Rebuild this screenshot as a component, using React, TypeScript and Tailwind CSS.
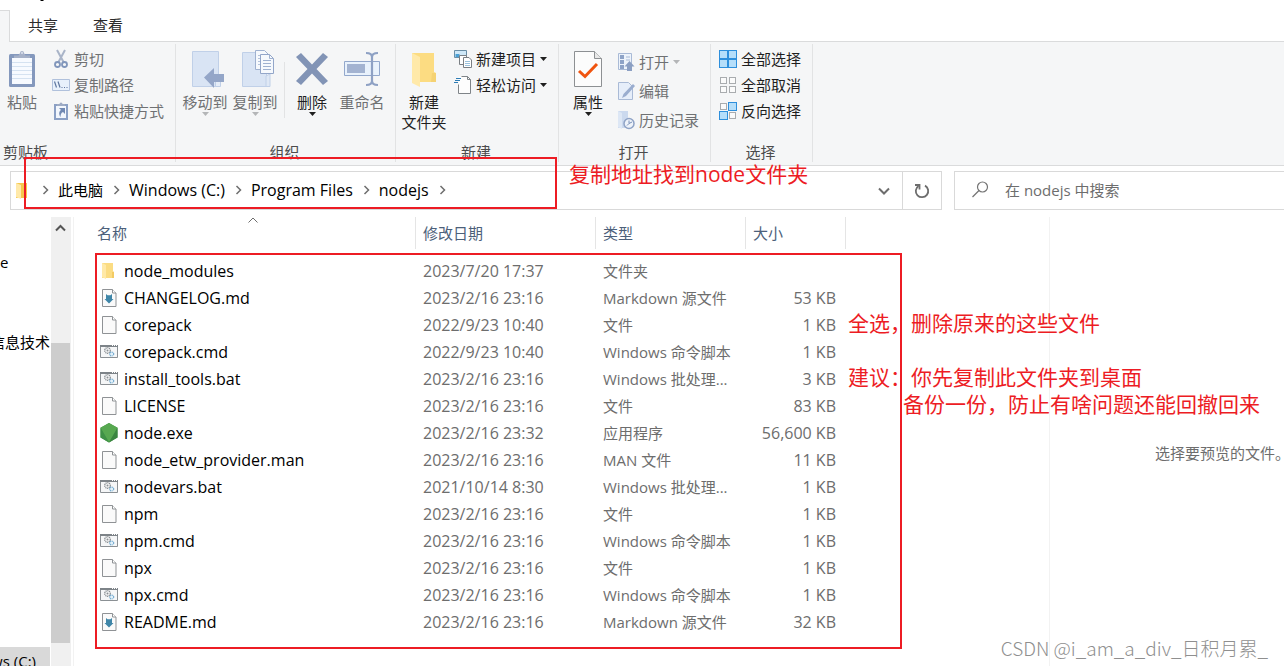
import type { ReactNode } from 'react'
import clsx from 'clsx'

type FileKind = 'folder' | 'md' | 'file' | 'script' | 'node'

interface FileRow {
  name: string
  date: string
  type: string
  size?: string
  kind: FileKind
}

const files: FileRow[] = [
  { name: 'node_modules', date: '2023/7/20 17:37', type: '文件夹', kind: 'folder' },
  { name: 'CHANGELOG.md', date: '2023/2/16 23:16', type: 'Markdown 源文件', size: '53 KB', kind: 'md' },
  { name: 'corepack', date: '2022/9/23 10:40', type: '文件', size: '1 KB', kind: 'file' },
  { name: 'corepack.cmd', date: '2022/9/23 10:40', type: 'Windows 命令脚本', size: '1 KB', kind: 'script' },
  { name: 'install_tools.bat', date: '2023/2/16 23:16', type: 'Windows 批处理...', size: '3 KB', kind: 'script' },
  { name: 'LICENSE', date: '2023/2/16 23:16', type: '文件', size: '83 KB', kind: 'file' },
  { name: 'node.exe', date: '2023/2/16 23:32', type: '应用程序', size: '56,600 KB', kind: 'node' },
  { name: 'node_etw_provider.man', date: '2023/2/16 23:16', type: 'MAN 文件', size: '11 KB', kind: 'file' },
  { name: 'nodevars.bat', date: '2021/10/14 8:30', type: 'Windows 批处理...', size: '1 KB', kind: 'script' },
  { name: 'npm', date: '2023/2/16 23:16', type: '文件', size: '1 KB', kind: 'file' },
  { name: 'npm.cmd', date: '2023/2/16 23:16', type: 'Windows 命令脚本', size: '1 KB', kind: 'script' },
  { name: 'npx', date: '2023/2/16 23:16', type: '文件', size: '1 KB', kind: 'file' },
  { name: 'npx.cmd', date: '2023/2/16 23:16', type: 'Windows 命令脚本', size: '1 KB', kind: 'script' },
  { name: 'README.md', date: '2023/2/16 23:16', type: 'Markdown 源文件', size: '32 KB', kind: 'md' },
]

const folders = ['Windows (C:)', 'Program Files', 'nodejs']

/* ---------- file icons ---------- */

function FileIcon({ kind }: { kind: FileKind }) {
  if (kind === 'folder') {
    return (
      <svg width="18" height="18" viewBox="0 0 18 18">
        <path d="M2 1h11v8l1 1v6H2z" fill="#fbdc83" />
        <path d="M2 1l4 2v14l-4-2z" fill="#ffe9a8" />
        <path d="M12 10h2v6h-2z" fill="#f3cb63" />
      </svg>
    )
  }
  if (kind === 'script') {
    return (
      <svg width="18" height="18" viewBox="0 0 18 18">
        <path d="M.5 2.5h17v12H.5z" fill="#f5f6f7" stroke="#8b9094" />
        <path d="M0 2h18v2H0z" fill="#7d8388" />
        <path d="M12 2.500h1M14 2.500h1M16 2.500h1" stroke="#fff" />
        <circle cx="7.500" cy="7.500" r="2.800" fill="none" stroke="#8b9094" strokeDasharray="1.200 .6" strokeWidth="1.300" />
        <circle cx="7.500" cy="7.500" r="1" fill="#8b9094" />
        <circle cx="11.700" cy="11" r="2" fill="#e3f1fa" stroke="#77add0" strokeDasharray="1.200 .5" strokeWidth="1.200" />
      </svg>
    )
  }
  if (kind === 'node') {
    return (
      <svg width="18" height="20" viewBox="0 0 18 20">
        <path d="M9 0l8.500 4.800v9.800L9 19.500.5 14.600V4.800z" fill="#46984a" />
        <path d="M9 0l8.500 4.800L9 19.500.5 4.800z" fill="#57a850" />
        <path d="M.5 4.800L9 19.500.5 14.600z" fill="#3f9146" />
        <path d="M17.500 4.800v9.800L9 19.500z" fill="#3a8540" />
      </svg>
    )
  }
  return (
    <svg width="18" height="20" viewBox="0 0 18 20">
      <path d="M2.500 1.500h10l3.500 3.500v13.500H2.500z" fill="#fafafa" stroke="#8f9295" />
      <path d="M12.500 1.500v3.500H16" fill="#fff" stroke="#8f9295" />
      {kind === 'md' && (
        <path d="M6 6l1.500 1.200h3L12 6v5h1.500L9 15.500 4.500 11H6z" fill="#3f86a8" />
      )}
    </svg>
  )
}

/* ---------- ribbon icons ---------- */

function PasteIcon() {
  return (
    <svg width="28" height="38" viewBox="0 0 28 38">
      <rect x="1" y="4" width="26" height="33" rx="1.500" fill="#8498bd" />
      <path d="M4 8h20v26H4z" fill="#f7faff" />
      <path d="M4 12.500h20M4 16.500h20M4 20.500h20M4 24.500h20M4 28.500h20" stroke="#d5e2f1" />
      <path d="M6 8V5.500h4.500L12 3a2 2 0 1 1 4 0l1.500 2.500H22V8z" fill="#a6b1c8" />
      <circle cx="14" cy="3" r="1" fill="#dfe5ef" />
    </svg>
  )
}

function CutIcon() {
  return (
    <svg width="18" height="20" viewBox="0 0 18 20" fill="none">
      <path d="M5 1l6.500 12M13 1L6.500 13" stroke="#a9b4c8" strokeWidth="2" />
      <circle cx="5.500" cy="15.500" r="2.500" stroke="#8196bb" strokeWidth="1.800" />
      <circle cx="12.500" cy="15.500" r="2.500" stroke="#8196bb" strokeWidth="1.800" />
    </svg>
  )
}

function CopyPathIcon() {
  return (
    <svg width="18" height="12" viewBox="0 0 18 12">
      <path d="M.5.5h17v11H.5z" fill="#e8f1fb" stroke="#b0c1dc" />
      <path d="M2.500 2.500l2 6M6 2.500l2 6M9.500 8.500h1M12 8.500h1M14.500 8.500h1" stroke="#5f779f" strokeWidth="1.200" />
    </svg>
  )
}

function PasteShortcutIcon() {
  return (
    <svg width="18" height="20" viewBox="0 0 18 20">
      <path d="M2 3h14v16H2z" fill="#8ba0c5" />
      <path d="M4 5h10v12H4z" fill="#f3f7fd" />
      <path d="M5 5V3h2.500a1.500 1.500 0 0 1 3 0H13v2z" fill="#9eabc4" />
      <path d="M7 7h6v6l-2-2c-2 1-2.500 2.500-2.500 5-2-3-1.500-5.500.5-7z" fill="#7189b3" />
    </svg>
  )
}

function MoveToIcon() {
  return (
    <svg width="40" height="38" viewBox="0 0 40 38">
      <path d="M7.500 1.500h26v35h-26z" fill="#d9e4f4" stroke="#c0d0e8" />
      <path d="M30.500 25h5v11.500h-5z" fill="#e5edf8" stroke="#c0d0e8" />
      <path d="M19 27.500L29 18v6h10v8H29v6z" fill="#94a6c8" />
    </svg>
  )
}

function CopyToIcon() {
  return (
    <svg width="40" height="38" viewBox="0 0 40 38">
      <path d="M7.500 2.500h24v34h-24z" fill="#d9e4f4" stroke="#c0d0e8" />
      <path d="M31 26l4-2v12.500h-4z" fill="#dfe8f5" stroke="#c0d0e8" />
      <path d="M20.500.5h9l4 4v15h-13z" fill="#f6f9fd" stroke="#9fb1d0" />
      <path d="M23 5.500h6M23 8.500h6M23 11.500h6M23 14.500h6" stroke="#b4c3dc" />
      <path d="M25.500 4.500h9l4 4v15h-13z" fill="#f6f9fd" stroke="#93a6c9" />
      <path d="M34.500 4.500v4h4M28 10.500h8M28 13.500h8M28 16.500h8M28 19.500h8" fill="none" stroke="#9fb1d0" />
    </svg>
  )
}

function DeleteIcon() {
  return (
    <svg width="34" height="38" viewBox="0 0 34 38">
      <path d="M1 7l5-4 11 11.500L28 3l5 4-11.500 12L33 31l-5 4-11-11.500L6 35l-5-4 11.500-12z" fill="#8294b6" />
    </svg>
  )
}

function RenameIcon() {
  return (
    <svg width="38" height="38" viewBox="0 0 38 38">
      <path d="M1.500 11.500h35v14h-35z" fill="#e9f2fc" stroke="#93a8cc" />
      <path d="M4 14h18v9H4z" fill="#a3b3d1" />
      <path d="M23 3q6 0 6 4v24q0 4-6 4M35 3q-6 0-6 4v24q0 4 6 4" fill="none" stroke="#8ea1c4" strokeWidth="2.200" />
    </svg>
  )
}

function NewFolderIcon() {
  return (
    <svg width="28" height="38" viewBox="0 0 28 38">
      <path d="M2 3h22v19l2 1v9H2z" fill="#fcdc82" />
      <path d="M22 23h4v9h-5z" fill="#f5d273" />
      <path d="M2 3l8 4v30l-8-4z" fill="#ffe9a9" />
    </svg>
  )
}

function NewItemIcon() {
  return (
    <svg width="18" height="18" viewBox="0 0 18 18">
      <path d="M.5.5h12v7H.5z" fill="#cfe8f8" stroke="#6a8ea6" />
      <path d="M1.500 4h4v3h-4z" fill="#4aa0d5" />
      <path d="M5.500 5.500h7v9h-7z" fill="#fff" stroke="#7a7f84" />
      <path d="M9.500 7.500h5.500l2.500 2.500v7.500h-8z" fill="#fff" stroke="#7a7f84" />
      <path d="M11 11.500h5M11 13.500h5M11 15.500h5" stroke="#9bc2dd" />
    </svg>
  )
}

function EasyAccessIcon() {
  return (
    <svg width="18" height="20" viewBox="0 0 18 20">
      <path d="M4.500 1.500h9l3 3v14h-12z" fill="#fdfdfd" />
      <path d="M7.500 1.500h6l3 3v14h-12v-9M13.500 1.500v3h3" fill="none" stroke="#7f8488" />
      <path d="M2 3.500h5M1 5.500h5M0 7.500h4" stroke="#2d7cb5" />
    </svg>
  )
}

function PropertiesIcon() {
  return (
    <svg width="30" height="38" viewBox="0 0 30 38">
      <path d="M1.500 1.500h20l7 7v28h-27z" fill="#fcfcfc" stroke="#8d9093" />
      <path d="M21.500 1.500v7h7" fill="#e8e8e8" stroke="#8d9093" />
      <path d="M6 21l6 5.500L24 14" fill="none" stroke="#f0540f" strokeWidth="3" />
    </svg>
  )
}

function OpenIcon() {
  return (
    <svg width="18" height="20" viewBox="0 0 18 20">
      <path d="M1.500 1.500h13v16h-13z" fill="#edf3fb" stroke="#a9bad6" />
      <path d="M3 3h4v4H3zM3 8h4v4H3zM3 13h4v4H3z" fill="#8ea3c7" />
      <path d="M9 5h4M9 8h4" stroke="#a9bad6" />
      <path d="M12.500 9l5 5.500h-2.500V19h-5v-4.500H7.500z" fill="#8b9fc3" />
    </svg>
  )
}

function EditIcon() {
  return (
    <svg width="18" height="20" viewBox="0 0 18 20">
      <path d="M1.500 1.500h10l4 4v13h-14z" fill="#e6eefa" stroke="#a9bad6" />
      <path d="M16 3l-9.500 10L5 17l4-2 9-10z" fill="#9aadcf" />
    </svg>
  )
}

function HistoryIcon() {
  return (
    <svg width="18" height="20" viewBox="0 0 18 20">
      <path d="M1 1h10v17H1z" fill="#cbd9ee" />
      <path d="M1 1l4 2v16l-4-2z" fill="#dde7f5" />
      <circle cx="12" cy="13.500" r="5" fill="#eef3fa" stroke="#8fa3c6" strokeWidth="1.500" />
      <path d="M12 10.500v3l3-1.500M12 13.500l-2 2" fill="none" stroke="#7890b8" />
    </svg>
  )
}

function SelectIcon({ on }: { on: boolean[] }) {
  const spots = [[1, 1], [10, 1], [1, 10], [10, 10]]
  return (
    <svg width="18" height="18" viewBox="0 0 18 18">
      {spots.map(([x, y], i) => (
        <rect
          key={i}
          x={on[i] ? x - 0.5 : x + 0.5}
          y={on[i] ? y - 0.5 : y + 0.5}
          width={on[i] ? 8 : 6}
          height={on[i] ? 8 : 6}
          fill={on[i] ? '#b5defa' : '#fbfbfb'}
          stroke={on[i] ? '#2e8fdc' : '#a9acaf'}
        />
      ))}
    </svg>
  )
}

function Caret({ dim = false }: { dim?: boolean }) {
  return (
    <svg width="7" height="4" viewBox="0 0 7 4">
      <path d="M0 0h7L3.500 4z" fill={dim ? '#b4b6b8' : '#1f1f1f'} />
    </svg>
  )
}

/* ---------- ribbon parts ---------- */

interface BigButtonProps {
  icon: ReactNode
  label: ReactNode
  className?: string
  dim?: boolean
  caret?: boolean
}

function BigButton({ icon, label, className, dim, caret }: BigButtonProps) {
  return (
    <button
      className={clsx(
        'flex shrink-0 flex-col items-center whitespace-nowrap pt-1.5',
        dim ? 'text-[#6f7173]' : 'text-[#1f1f1f]',
        className,
      )}
    >
      <span className="mb-1 flex h-[38px] items-center">{icon}</span>
      <span className="leading-5">{label}</span>
      {caret && <Caret dim={dim} />}
    </button>
  )
}

interface SmallButtonProps {
  icon: ReactNode
  label: string
  dim?: boolean
  caret?: boolean
  tall?: boolean
}

function SmallButton({ icon, label, dim, caret, tall }: SmallButtonProps) {
  return (
    <button
      className={clsx(
        'flex items-center gap-1 whitespace-nowrap',
        tall ? 'h-[29px]' : 'h-[26px]',
        dim ? 'text-[#6f7173]' : 'text-[#1f1f1f]',
      )}
    >
      <span className="flex w-[18px] justify-center">{icon}</span>
      {label}
      {caret && <Caret dim={dim} />}
    </button>
  )
}

interface GroupProps {
  title: string
  className?: string
  titleClass?: string
  children: ReactNode
}

function Group({ title, className, titleClass = 'pr-0.5 text-center', children }: GroupProps) {
  return (
    <section className={clsx('flex shrink-0 flex-col border-r border-[#e2e3e4]', className)}>
      <div className="flex h-[98px] items-start">{children}</div>
      <h2 className={clsx('leading-5 text-[#4c4c4c]', titleClass)}>{title}</h2>
    </section>
  )
}

function Ribbon() {
  return (
    <div className="flex border-b border-[#dadbdc] bg-[#f5f6f7] pb-[3px] pt-0.5">
      <Group title="剪贴板" className="w-44 pl-[3px]" titleClass="text-left">
        <BigButton icon={<PasteIcon />} label="粘贴" className="w-[38px]" dim />
        <div className="flex flex-col pl-[11px] pt-0.5">
          <SmallButton icon={<CutIcon />} label="剪切" dim />
          <SmallButton icon={<CopyPathIcon />} label="复制路径" dim />
          <SmallButton icon={<PasteShortcutIcon />} label="粘贴快捷方式" dim />
        </div>
      </Group>
      <Group title="组织" className="w-[220px]">
        <BigButton icon={<MoveToIcon />} label="移动到" className="ml-1 w-[50px]" dim caret />
        <BigButton icon={<CopyToIcon />} label="复制到" className="w-[50px]" dim caret />
        <div className="ml-1 mr-0.5 mt-[18px] h-14 border-l border-[#e2e3e4]" />
        <BigButton icon={<DeleteIcon />} label="删除" className="w-[50px]" caret />
        <BigButton icon={<RenameIcon />} label="重命名" className="w-[50px]" dim />
      </Group>
      <Group title="新建" className="w-[163px]">
        <BigButton
          icon={<NewFolderIcon />}
          label={<>新建<br />文件夹</>}
          className="ml-1 w-12"
        />
        <div className="flex flex-col pl-1.5 pt-0.5">
          <SmallButton icon={<NewItemIcon />} label="新建项目" caret />
          <SmallButton icon={<EasyAccessIcon />} label="轻松访问" caret />
        </div>
      </Group>
      <Group title="打开" className="w-[152px]">
        <BigButton icon={<PropertiesIcon />} label="属性" className="ml-1 w-[50px]" caret />
        <div className="flex flex-col pl-1 pt-[3px]">
          <SmallButton icon={<OpenIcon />} label="打开" dim caret tall />
          <SmallButton icon={<EditIcon />} label="编辑" dim tall />
          <SmallButton icon={<HistoryIcon />} label="历史记录" dim tall />
        </div>
      </Group>
      <Group title="选择" className="w-[102px]">
        <div className="flex flex-col pl-2 pt-0.5">
          <SmallButton icon={<SelectIcon on={[true, true, true, true]} />} label="全部选择" />
          <SmallButton icon={<SelectIcon on={[false, false, false, false]} />} label="全部取消" />
          <SmallButton icon={<SelectIcon on={[false, true, true, false]} />} label="反向选择" />
        </div>
      </Group>
    </div>
  )
}

/* ---------- address bar ---------- */

function CrumbChevron() {
  return (
    <svg width="26" height="10" viewBox="0 0 26 10" className="shrink-0">
      <path d="M11.500 1l4 4-4 4" fill="none" stroke="#6d6d6d" strokeWidth="1.500" />
    </svg>
  )
}

function AddressBar() {
  return (
    <div className="flex gap-3 pb-[7px] pl-2.5 pt-[5px]">
      <nav className="flex h-[39px] min-w-0 flex-1 items-center border border-[#d9d9d9] pl-[5px]">
        <div className="flex items-center pb-0.5">
          <svg width="16" height="18" viewBox="0 0 16 18" className="shrink-0">
            <path d="M0 2h11v15H0z" fill="#f5c84e" />
            <path d="M0 2l5 2v14l-5-2z" fill="#ffe9a9" />
          </svg>
          <CrumbChevron />
          <a href="#" className="whitespace-nowrap text-black">此电脑</a>
          <CrumbChevron />
          {folders.map(folder => (
            <div key={folder} className="flex items-center">
              <a href="#" className="whitespace-nowrap text-base leading-5 text-black">{folder}</a>
              <CrumbChevron />
            </div>
          ))}
        </div>
        <button aria-label="历史地址" className="ml-auto flex h-full w-9 items-center justify-center">
          <svg width="12" height="8" viewBox="0 0 12 8">
            <path d="M1 1.500l5 5 5-5" fill="none" stroke="#6d6d6d" strokeWidth="2" />
          </svg>
        </button>
        <button aria-label="刷新" className="flex h-full w-[39px] items-center justify-center border-l border-[#d9d9d9]">
          <svg width="16" height="16" viewBox="0 0 16 16" fill="none" stroke="#6d6d6d" strokeWidth="1.800">
            <path d="M11 2.600a6.200 6.200 0 1 1-6.500.3" />
            <path d="M1 2h4.500v4.500" />
          </svg>
        </button>
      </nav>
      <label className="flex h-[39px] w-[330px] shrink-0 items-center border border-r-0 border-[#d9d9d9] pb-0.5 pl-[17px]">
        <svg width="17" height="17" viewBox="0 0 17 17" fill="none" stroke="#747474" strokeWidth="1.200" className="shrink-0">
          <circle cx="10.500" cy="6" r="5" />
          <path d="M7 9.500L.5 16" />
        </svg>
        <input
          type="text"
          aria-label="搜索"
          placeholder="在 nodejs 中搜索"
          className="ml-4 w-full bg-transparent outline-none placeholder:text-[#6d6d6d]"
        />
      </label>
    </div>
  )
}

/* ---------- main area ---------- */

function Sidebar() {
  return (
    <aside className="flex w-[51px] shrink-0 flex-col overflow-hidden whitespace-nowrap pr-px text-black">
      <div className="mt-[31px] h-7 leading-7">e</div>
      <div className="mt-[52px] flex h-7 justify-end leading-7">信息技术</div>
      <div className="mt-[291px] flex h-7 justify-end bg-[#d9d9d9] pr-3.5 leading-7">ws (C:)</div>
    </aside>
  )
}

function ScrollBar() {
  return (
    <div className="w-5 shrink-0 bg-[#f0f0f0] pr-px">
      <div className="flex h-[126px] justify-center pt-[7px]">
        <svg width="11" height="8" viewBox="0 0 11 8">
          <path d="M1 6.500L5.500 2 10 6.500" fill="none" stroke="#555" strokeWidth="2" />
        </svg>
      </div>
      <div className="h-[300px] bg-[#cdcdcd]" />
    </div>
  )
}

function FileTable() {
  return (
    <table className="w-[756px] table-fixed border-separate border-spacing-0 whitespace-nowrap text-left">
      <thead className="text-[#4c607a]">
        <tr className="h-8">
          <th className="relative w-[326px] border-r border-[#e5e5e5] px-[7px] font-normal">
            名称
            <svg width="10" height="6" viewBox="0 0 10 6" className="absolute left-1/2 top-0 -translate-x-1/2">
              <path d="M.5 5.500L5 1l4.500 4.500" fill="none" stroke="#6d6d6d" />
            </svg>
          </th>
          <th className="w-[180px] border-r border-[#e5e5e5] px-[7px] font-normal">修改日期</th>
          <th className="w-[150px] border-r border-[#e5e5e5] px-[7px] font-normal">类型</th>
          <th className="w-[100px] border-r border-[#e5e5e5] px-[7px] font-normal">大小</th>
        </tr>
      </thead>
      <tbody className="text-[#6d6d6d] before:block before:h-2">
        {files.map(file => (
          <tr key={file.name} className="h-[27px]">
            <td className="p-0 pl-2.5">
              <div className="flex items-center gap-1.5 text-base leading-5 text-black">
                <FileIcon kind={file.kind} />
                {file.name}
              </div>
            </td>
            <td className="px-[7px] py-0 text-base leading-5">{file.date}</td>
            <td className="px-[7px] py-0">{file.type}</td>
            <td className="py-0 pr-2.5 text-right text-base leading-5">{file.size}</td>
          </tr>
        ))}
      </tbody>
    </table>
  )
}

/* red notes drawn over the window */
function Annotations() {
  return (
    <div className="pointer-events-none absolute inset-0 whitespace-nowrap text-[21px] leading-[27px] text-[#ed1c24]">
      <div className="absolute left-6 top-[157px] h-[52px] w-[533px] border-2 border-[#ed1c24]" />
      <div className="absolute left-[95px] top-[253px] h-[396px] w-[807px] border-2 border-[#ed1c24]" />
      <p className="absolute left-[569px] top-[161px]">
        复制地址找到<span className="font-medium">node</span>文件夹
      </p>
      <p className="absolute left-[848px] top-[310px]">全选，删除原来的这些文件</p>
      <p className="absolute left-[848px] top-[364px]">建议：你先复制此文件夹到桌面</p>
      <p className="absolute left-[903px] top-[391px]">备份一份，防止有啥问题还能回撤回来</p>
    </div>
  )
}

export default function App() {
  return (
    <div className="relative flex h-screen flex-col overflow-hidden bg-white font-['Open_Sans','Noto_Sans_CJK_SC',sans-serif] text-[15px] leading-5">
      <div className="h-2.5 pl-10">
        <svg width="4" height="2" viewBox="0 0 4 2">
          <path d="M0 0h4L3 1H1z" fill="#000" />
        </svg>
      </div>
      <div className="flex h-8 border-b border-[#dadbdc] pb-px text-[#2b2b2b]">
        <div className="-mb-0.5 w-2.5 border-r border-t border-[#dadbdc] bg-[#f5f6f7]" />
        <button className="ml-[18px]">共享</button>
        <button className="ml-[35px]">查看</button>
      </div>
      <Ribbon />
      <AddressBar />
      <div className="flex min-h-0 flex-1">
        <Sidebar />
        <ScrollBar />
        <main className="ml-0.5 min-w-0 flex-1 overflow-hidden border-l border-[#f2f2f2] pl-4">
          <FileTable />
        </main>
        <aside className="w-[235px] shrink-0 overflow-hidden whitespace-nowrap border-l border-[#f2f2f2] pl-[105px] pt-[226px] text-[#6d6d6d]">
          选择要预览的文件。
        </aside>
      </div>
      <Annotations />
      <div className="absolute bottom-1.5 right-4 whitespace-nowrap font-['Noto_Sans_CJK_SC',sans-serif] text-[19px] leading-6 font-light text-[#8f8f8f]">
        CSDN @i_am_a_div_日积月累_
      </div>
    </div>
  )
}
